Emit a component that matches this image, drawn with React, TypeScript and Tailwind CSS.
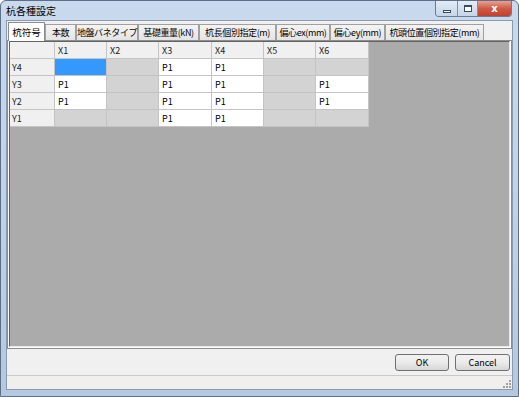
import React from 'react';

const tabs = [
  { label: '杭符号', w: 'w-[37px]' },
  { label: '本数', w: 'w-[31px]' },
  { label: '地盤バネタイプ', w: 'w-[62px]' },
  { label: '基礎重量(kN)', w: 'w-[61px]' },
  { label: '杭長個別指定(m)', w: 'w-[77px]' },
  { label: '偏心ex(mm)', w: 'w-[54px]' },
  { label: '偏心ey(mm)', w: 'w-[55px]' },
  { label: '杭頭位置個別指定(mm)', w: 'w-[99px]' },
];

// b = blue (selected), g = disabled, p = P1
const rows: { name: string; cells: string[] }[] = [
  { name: 'Y4', cells: ['b', 'g', 'p', 'p', 'g', 'g'] },
  { name: 'Y3', cells: ['p', 'g', 'p', 'p', 'g', 'p'] },
  { name: 'Y2', cells: ['p', 'g', 'p', 'p', 'g', 'p'] },
  { name: 'Y1', cells: ['g', 'g', 'p', 'p', 'g', 'g'] },
];

const cols = ['X1', 'X2', 'X3', 'X4', 'X5', 'X6'];

function Cell({ kind }: { kind: string }) {
  if (kind === 'b') return <div className="h-[17px] bg-[#3399ff] border-r border-b border-[#c4c4c4]" />;
  if (kind === 'g') return <div className="h-[17px] bg-[#d3d3d3] border-r border-b border-[#c4c4c4]" />;
  return (
    <div className="h-[17px] bg-white border-r border-b border-[#c4c4c4] pl-[3px] leading-[17px] text-[9px] text-black">
      P1
    </div>
  );
}

export default function App() {
  return (
    <div
      className="w-[519px] h-[397px] flex flex-col rounded-t-[6px] border border-[#5d6f86] bg-gradient-to-b from-[#c9daee] via-[#bed2ea] to-[#b4c8e2] overflow-hidden"
      style={{ fontFamily: '"Noto Sans CJK JP", "Liberation Sans", sans-serif' }}
    >
      {/* title bar */}
      <div className="h-[19px] flex items-start shrink-0">
        <span className="pl-[5px] pt-[3px] text-[10px] leading-[13px] text-black">杭各種設定</span>
        <div className="ml-auto mr-[6px] flex h-[16px] rounded-b-[4px] border border-t-0 border-[#6a7c94] overflow-hidden">
          <div className="w-[22px] flex items-center justify-center bg-gradient-to-b from-[#e3ecf6] to-[#c6d5e7] border-r border-[#7f8fa6]">
            <div className="w-[8px] h-[3px] border border-[#3b4a5e] bg-white mt-[5px]" />
          </div>
          <div className="w-[20px] flex items-center justify-center bg-gradient-to-b from-[#e3ecf6] to-[#c6d5e7] border-r border-[#7f8fa6]">
            <div className="w-[8px] h-[7px] border border-[#3b4a5e] border-t-2 bg-white" />
          </div>
          <div className="w-[33px] flex items-center justify-center bg-gradient-to-b from-[#e8a193] via-[#cf5a45] to-[#c2402b]">
            <span className="text-white text-[10px] font-bold leading-none" style={{ fontFamily: '"DejaVu Sans", sans-serif' }}>
              x
            </span>
          </div>
        </div>
      </div>

      {/* client */}
      <div className="flex-1 mx-[5px] mb-[6px] flex flex-col bg-[#f0f0f0] border border-[#8a9bb0]">
        {/* tabs */}
        <div className="h-[19px] flex items-end pl-[1px] shrink-0">
          {tabs.map((t, i) =>
            i === 0 ? (
              <div
                key={t.label}
                className={`${t.w} h-[19px] bg-white border border-b-0 border-[#8c8c8c] flex items-center justify-center text-[9.5px] text-black relative top-[1px] z-10`}
              >
                {t.label}
              </div>
            ) : (
              <div
                key={t.label}
                className={`${t.w} h-[16px] bg-gradient-to-b from-[#f4f4f4] to-[#e4e4e4] border border-b-0 border-[#a0a0a0] flex items-center justify-center text-[9px] text-black whitespace-nowrap tracking-[-0.4px]`}
              >
                {t.label}
              </div>
            )
          )}
        </div>

        {/* tab page */}
        <div className="h-[309px] shrink-0 bg-white border border-[#8c8c8c] px-[1px] pb-[1px] flex">
          <div className="flex-1 bg-[#ababab] border-l border-t border-[#646464] border-r border-b border-r-[#e8e8e8] border-b-[#e8e8e8]">
            <div className="grid grid-cols-[45px_52px_52px_53px_52px_52px_53px] w-max">
              <div className="h-[17px] bg-[#f0f0f0] border-r border-b border-[#c4c4c4]" />
              {cols.map((c) => (
                <div
                  key={c}
                  className="h-[17px] bg-[#f0f0f0] border-r border-b border-[#c4c4c4] pl-[3px] leading-[17px] text-[9px] text-[#222]"
                >
                  {c}
                </div>
              ))}
              {rows.map((r) => (
                <React.Fragment key={r.name}>
                  <div className="h-[17px] bg-[#f0f0f0] border-r border-b border-[#c4c4c4] pl-[2px] leading-[17px] text-[9px] text-[#222]">
                    {r.name}
                  </div>
                  {r.cells.map((k, j) => (
                    <Cell key={j} kind={k} />
                  ))}
                </React.Fragment>
              ))}
            </div>
          </div>
        </div>

        {/* buttons */}
        <div className="h-[26px] shrink-0 flex items-center justify-end gap-[6px] pr-[2px]">
          <button className="w-[54px] h-[17px] rounded-[3px] border border-[#707070] bg-gradient-to-b from-[#f2f2f2] via-[#ebebeb] to-[#d6d6d6] text-[9px] leading-none text-black">
            OK
          </button>
          <button className="w-[55px] h-[17px] rounded-[3px] border border-[#707070] bg-gradient-to-b from-[#f2f2f2] via-[#ebebeb] to-[#d6d6d6] text-[9px] leading-none text-black">
            Cancel
          </button>
        </div>

        {/* status bar */}
        <div className="flex-1 border-t border-[#c8c8c8] bg-[#f1efee] relative">
          <div className="absolute right-[1px] bottom-[1px] grid grid-cols-3 gap-[1px]">
            {[0, 0, 1, 0, 1, 1, 1, 1, 1].map((v, i) => (
              <div key={i} className={`w-[2px] h-[2px] ${v ? 'bg-[#a0a0a0]' : 'bg-transparent'}`} />
            ))}
          </div>
        </div>
      </div>
    </div>
  );
}
